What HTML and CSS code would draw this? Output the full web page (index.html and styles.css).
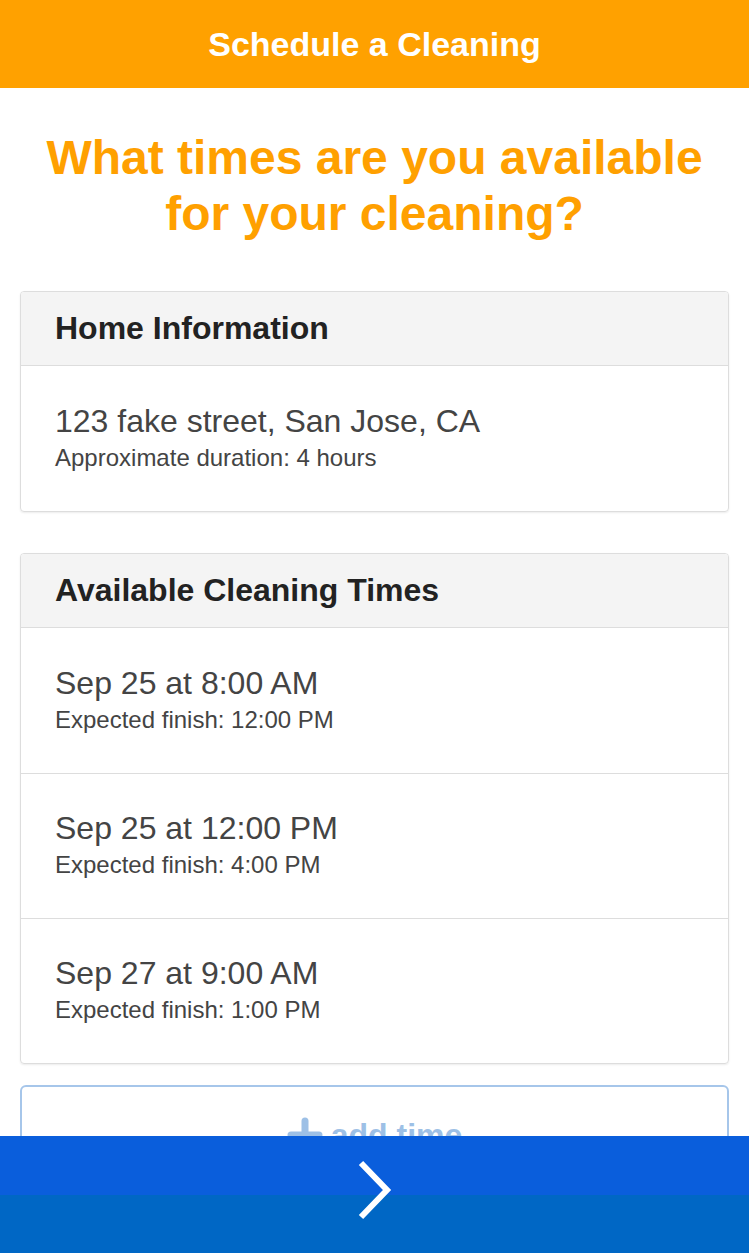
FILE: index.html
```html
<!DOCTYPE html>
<html>
<head>
<meta charset="utf-8">
<link rel="stylesheet" href="styles.css">
</head>
<body>
<header class="topbar">Schedule a Cleaning</header>
<main class="content">
  <h1 class="question">What times are you available<br>for your cleaning?</h1>

  <section class="panel">
    <div class="panel-heading">Home Information</div>
    <div class="panel-row">
      <div class="row-main">123 fake street, San Jose, CA</div>
      <div class="row-sub">Approximate duration: 4 hours</div>
    </div>
  </section>

  <section class="panel">
    <div class="panel-heading">Available Cleaning Times</div>
    <div class="panel-row">
      <div class="row-main">Sep 25 at 8:00 AM</div>
      <div class="row-sub">Expected finish: 12:00 PM</div>
    </div>
    <div class="panel-row">
      <div class="row-main">Sep 25 at 12:00 PM</div>
      <div class="row-sub">Expected finish: 4:00 PM</div>
    </div>
    <div class="panel-row">
      <div class="row-main">Sep 27 at 9:00 AM</div>
      <div class="row-sub">Expected finish: 1:00 PM</div>
    </div>
  </section>

  <button class="add-time" type="button">
    <svg class="plus" width="36" height="36" viewBox="0 0 36 36"><path d="M18 4v28M4 18h28" stroke="currentColor" stroke-width="7" stroke-linecap="round"/></svg>
    <span>add time</span>
  </button>
</main>
<footer class="nextbar">
  <svg class="chevron" width="40" height="64" viewBox="0 0 40 64"><path d="M6 4 L32 31 L6 58" fill="none" stroke="#fff" stroke-width="6" stroke-linecap="butt" stroke-linejoin="miter"/></svg>
</footer>
</body>
</html>
```

FILE: styles.css
```css
* { box-sizing: border-box; }
html, body { margin: 0; padding: 0; }
body {
  font-family: "Liberation Sans", Arial, Helvetica, sans-serif;
  background: #fff;
  color: #333;
}
.topbar {
  height: 88px;
  background: #ffa100;
  color: #fff;
  font-weight: bold;
  font-size: 34px;
  display: flex;
  align-items: center;
  justify-content: center;
}
.content {
  padding: 0 20px 200px;
}
.question {
  margin: 42px 0 49px;
  color: #ffa000;
  font-size: 48px;
  line-height: 56px;
  font-weight: bold;
  text-align: center;
}
.panel {
  border: 1px solid #ddd;
  border-radius: 4px;
  box-shadow: 0 1px 2px rgba(0,0,0,0.08);
  margin-bottom: 41px;
  overflow: hidden;
}
.panel + .panel { margin-bottom: 21px; }
.panel-heading {
  height: 74px;
  background: #f4f4f4;
  border-bottom: 1px solid #ddd;
  padding: 0 34px;
  display: flex;
  align-items: center;
  font-weight: bold;
  font-size: 32px;
  color: #222;
}
.panel-row {
  height: 145px;
  padding: 0 34px;
  display: flex;
  flex-direction: column;
  justify-content: center;
  border-top: 1px solid #ddd;
}
.panel-heading + .panel-row { border-top: 0; height: 145px; }
.row-main {
  font-size: 32px;
  color: #444;
  line-height: 36px;
  margin-top: -2px;
}
.row-sub {
  font-size: 24px;
  color: #444;
  line-height: 30px;
  margin-top: 4px;
}
.add-time {
  display: flex;
  width: 100%;
  height: 100px;
  align-items: center;
  justify-content: center;
  gap: 8px;
  background: #fff;
  border: 2px solid #a6c6ea;
  border-radius: 6px;
  color: #9dc0e6;
  font-family: "Liberation Sans", Arial, sans-serif;
  font-weight: bold;
  font-size: 32px;
  padding: 0;
}
.plus { display: block; }
.nextbar {
  position: fixed;
  left: 0;
  right: 0;
  bottom: 0;
  height: 117px;
  background: linear-gradient(to bottom, #0a5edc 0, #0a5edc 59px, #0067c5 59px, #0067c5 100%);
  display: flex;
  align-items: center;
  justify-content: center;
}
.chevron { display: block; margin-left: 0; margin-bottom: 8px; }
```
